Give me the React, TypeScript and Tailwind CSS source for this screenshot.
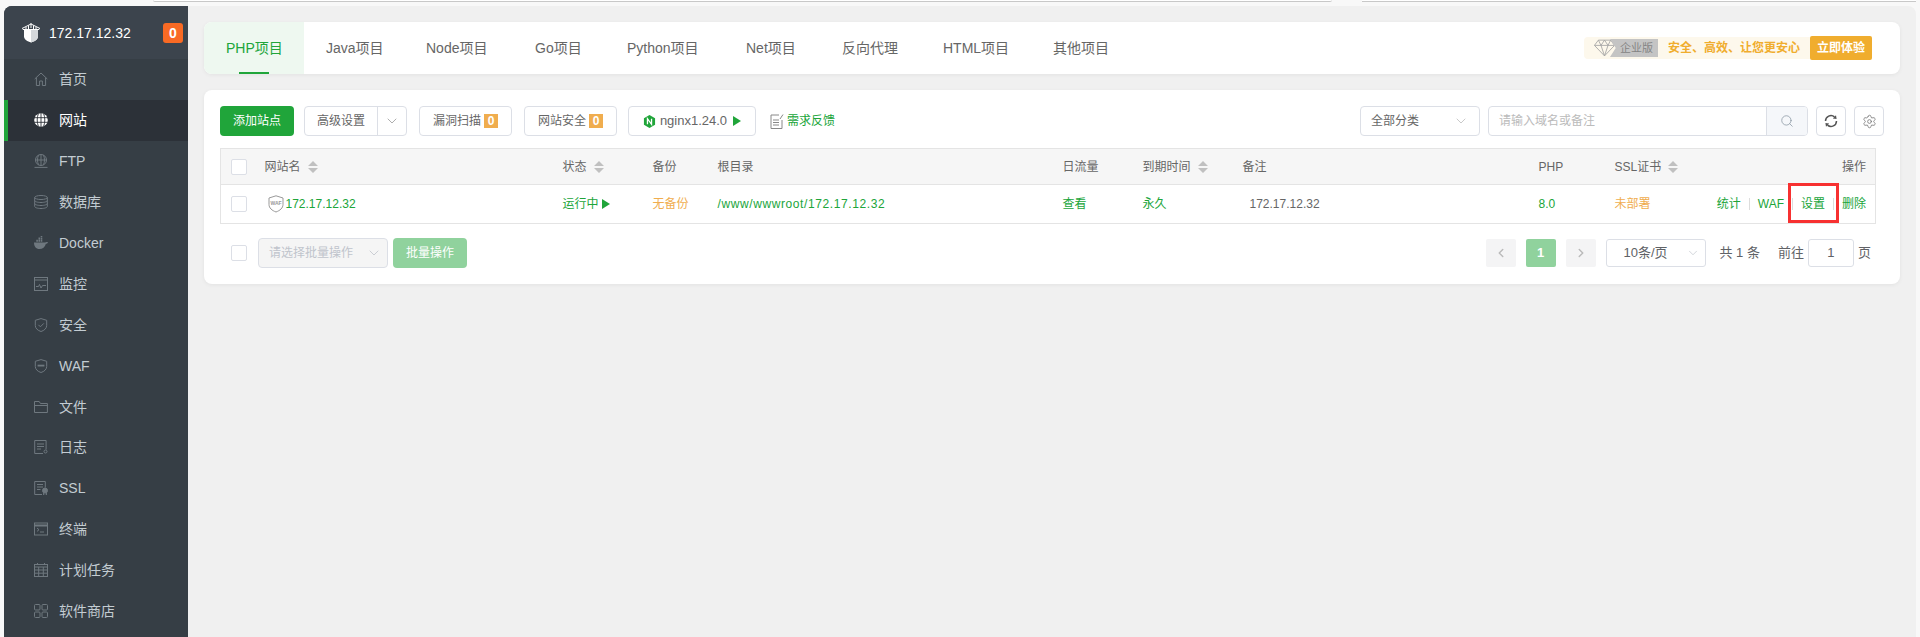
import { ChevronDown, ChevronLeft, ChevronRight, Search, Settings } from "lucide-react"
import type { ReactNode } from "react"

const font = "[font-family:'Liberation_Sans','Noto_Sans_CJK_SC',sans-serif]"

const NavSvg = ({ children }: { children: ReactNode }) => (
  <svg
    viewBox="0 0 14 14"
    fill="none"
    stroke="#6f787f"
    strokeWidth="1"
    className="h-[14px] w-[14px] shrink-0"
  >
    {children}
  </svg>
)

const navItems: { label: string; active?: boolean; icon: ReactNode }[] = [
  {
    label: "首页",
    icon: (
      <NavSvg>
        <path d="M.7 7 7 1l6.300 6M2.400 5.800v7.700h3.200V9h2.800v4.500h3.200V5.800" />
      </NavSvg>
    ),
  },
  {
    label: "网站",
    active: true,
    icon: (
      <svg viewBox="0 0 14 14" className="h-[14px] w-[14px] shrink-0">
        <circle cx="7" cy="7" r="6.800" fill="#fff" />
        <path
          d="M0 4.700h14M0 9.300h14M7 0v14M4.400.6c-1.600 4-1.600 8.800 0 12.800M9.600.6c1.600 4 1.600 8.800 0 12.800"
          fill="none"
          stroke="#2c3138"
          strokeWidth=".9"
        />
      </svg>
    ),
  },
  {
    label: "FTP",
    icon: (
      <NavSvg>
        <circle cx="7" cy="6" r="5.500" />
        <path d="M1.500 6h11M7 .5v11M4.500 1.200c-1.300 3-1.300 6.600 0 9.600M9.500 1.200c1.300 3 1.300 6.600 0 9.600M.5 13.400h13" />
      </NavSvg>
    ),
  },
  {
    label: "数据库",
    icon: (
      <NavSvg>
        <ellipse cx="7" cy="2.500" rx="6.300" ry="2" />
        <path d="M.7 2.500v9c0 1.100 2.800 2 6.300 2s6.300-.9 6.300-2v-9M.7 5.500c0 1.100 2.800 2 6.300 2s6.300-.9 6.300-2M.7 8.500c0 1.100 2.800 2 6.300 2s6.300-.9 6.300-2" />
      </NavSvg>
    ),
  },
  {
    label: "Docker",
    icon: (
      <svg viewBox="0 0 14 14" className="h-[14px] w-[14px] shrink-0" fill="#6f787f">
        <path d="M0 6.500h11.200c.5-.6 1.700-.8 2.800-.3-.4 1-1.300 1.500-2.100 1.500C11 11 8.600 13 5.400 13 2 13 0 10.500 0 6.500Z" />
        <path d="M2.300 3.800h1.600v2H2.300zM4.500 3.800h1.600v2H4.500zM6.700 3.800h1.600v2H6.700zM4.500 1.400h1.600v2H4.500zM6.700 1.400h1.600v2H6.700zM6.700-.6h1.600v1.600H6.700z" />
      </svg>
    ),
  },
  {
    label: "监控",
    icon: (
      <NavSvg>
        <rect x=".5" y=".5" width="13" height="13" />
        <path d="M.5 3h13M2 9.500h2.500l1-2 1.500 3.500 1.500-2.500H12" />
      </NavSvg>
    ),
  },
  {
    label: "安全",
    icon: (
      <NavSvg>
        <path d="M7 .6 1.300 2.300v5.200c0 2.900 2.500 5 5.700 6 3.200-1 5.700-3.100 5.700-6V2.300L7 .6Z" />
        <path d="m4.400 6.800 2 2 3.400-3.400" />
      </NavSvg>
    ),
  },
  {
    label: "WAF",
    icon: (
      <NavSvg>
        <path d="M7 .6 1.300 2.300v5.200c0 2.900 2.500 5 5.700 6 3.200-1 5.700-3.100 5.700-6V2.300L7 .6Z" />
        <path d="M3.600 5.700h6.800v1.800H3.600z" fill="#6f787f" stroke="none" />
      </NavSvg>
    ),
  },
  {
    label: "文件",
    icon: (
      <NavSvg>
        <path d="M.5 12.500v-11h4.700l1.200 2h7v9H.5ZM.5 5.500h13" />
      </NavSvg>
    ),
  },
  {
    label: "日志",
    icon: (
      <NavSvg>
        <path d="M9 13.500H.7V.5h11.400v9M3 4h7M3 6.500h7M3 9h4" />
        <circle cx="11.500" cy="11.500" r="1.500" />
      </NavSvg>
    ),
  },
  {
    label: "SSL",
    icon: (
      <NavSvg>
        <path d="M8 13.500H.7V.5h10.600v6M3 3.500h6M3 6h6M3 8.500h3.500" />
        <circle cx="11" cy="9.500" r="2.500" fill="#6f787f" />
        <path d="M9.700 12v2M12.300 12v2" strokeWidth="1.200" />
      </NavSvg>
    ),
  },
  {
    label: "终端",
    icon: (
      <NavSvg>
        <rect x=".5" y="1" width="13" height="12" />
        <path d="M.5 3.500h13" strokeWidth="2" />
        <path d="m3 6 2 1.700L3 9.400M6 10h4" />
      </NavSvg>
    ),
  },
  {
    label: "计划任务",
    icon: (
      <NavSvg>
        <rect x=".5" y="1.500" width="13" height="12" />
        <path d="M.5 4h13M.5 7h13M.5 10.200h13M4.700 4v9.500M9.300 4v9.500M3.500 0v2M10.500 0v2" />
      </NavSvg>
    ),
  },
  {
    label: "软件商店",
    icon: (
      <NavSvg>
        <rect x=".5" y=".5" width="5.500" height="5.500" rx="1" />
        <rect x="8" y=".5" width="5.500" height="5.500" rx="1" />
        <rect x=".5" y="8" width="5.500" height="5.500" rx="1" />
        <rect x="8" y="8" width="5.500" height="5.500" rx="1" />
      </NavSvg>
    ),
  },
]

const tabs = [
  { label: "PHP项目", width: "w-[100px]" },
  { label: "Java项目", width: "w-[100px]" },
  { label: "Node项目", width: "w-[109px]" },
  { label: "Go项目", width: "w-[92px]" },
  { label: "Python项目", width: "w-[119px]" },
  { label: "Net项目", width: "w-[96px]" },
  { label: "反向代理", width: "w-[101px]" },
  { label: "HTML项目", width: "w-[110px]" },
  { label: "其他项目", width: "w-[101px]" },
]

const SortCaret = () => (
  <svg viewBox="0 0 10 12" className="ml-[7px] h-[12px] w-[10px] shrink-0" fill="#c0c0c0">
    <path d="M5 0 10 5H0ZM5 12 0 7h10Z" />
  </svg>
)

const Play = ({ className }: { className: string }) => (
  <svg viewBox="0 0 8 10" className={className} fill="#20a53a">
    <path d="M0 0 8 5 0 10Z" />
  </svg>
)

const Checkbox = () => (
  <span className="block h-[16px] w-[16px] rounded-[2px] border border-[#dcdfe6] bg-white" />
)

const ToolButton = ({ children, className }: { children: ReactNode; className: string }) => (
  <div
    className={`flex h-[30px] items-center rounded-[4px] border border-[#dcdfe6] bg-white text-xs text-[#666] ${className}`}
  >
    {children}
  </div>
)

const CountBadge = () => (
  <span className="ml-[3px] flex h-[14px] w-[14px] items-center justify-center bg-[#f0ad4e] text-xs leading-none font-bold text-white">
    0
  </span>
)

const Sidebar = () => (
  <aside className="flex w-[184px] shrink-0 flex-col bg-[#363e45]">
    <div className="flex h-[53px] shrink-0 items-center bg-[#3c444d] pr-[5px] pl-[18px]">
      <svg viewBox="0 0 18 20" className="h-[20px] w-[18px] shrink-0">
        <path d="M2 7h14v6.500c0 3-3.500 5-7 6-3.500-1-7-3-7-6V7Z" fill="#fff" />
        <path d="M9 7v12.500c3.500-1 7-3 7-6V7H9Z" fill="#d5d8db" />
        <path d="M0 5.500 9 1l9 4.500-1 1H1l-1-1Z" fill="none" stroke="#fff" strokeWidth="1" />
        <path d="M9 0v5M4 4v2M14 4v2M6.500 2.500V6M11.500 2.500V6" stroke="#fff" strokeWidth="1" />
      </svg>
      <span className="ml-[9px] text-sm text-white">172.17.12.32</span>
      <span className="ml-auto flex h-[20px] w-[20px] items-center justify-center rounded-[3px] bg-[#f96a24] text-sm font-bold text-white">
        0
      </span>
    </div>
    <nav>
      {navItems.map((item) => (
        <div
          key={item.label}
          className={`flex h-[40.9px] items-center text-sm ${
            item.active
              ? "border-l-4 border-[#20a53a] bg-[#2c3138] pl-[26px] text-white"
              : "pl-[30px] text-[#c3ccd2]"
          }`}
        >
          {item.icon}
          <span className="ml-[11px]">{item.label}</span>
        </div>
      ))}
    </nav>
  </aside>
)

const TabBar = () => (
  <div className="flex h-[52px] items-stretch overflow-hidden rounded-[8px] bg-white shadow-[0_1px_4px_rgba(0,0,0,0.06)]">
    {tabs.map((tab, i) => (
      <div
        key={tab.label}
        className={`relative flex items-center pl-[22px] text-sm ${tab.width} ${
          i === 0 ? "bg-[#eef8f0] text-[#20a53a]" : "text-[#666]"
        }`}
      >
        {tab.label}
        {i === 0 && (
          <span className="absolute bottom-0 left-[35px] h-[2px] w-[30px] bg-[#20a53a]" />
        )}
      </div>
    ))}
    <div className="ml-auto flex items-center pr-[28px]">
      <div className="flex h-[22px] items-center rounded-l-[4px] bg-[#fdf8ec] text-xs font-bold">
        <svg viewBox="0 0 24 20" className="ml-[10px] h-[18px] w-[21px]" fill="none" stroke="#a5a5a5">
          <path d="M5 1h14l4.500 6L12 19 .5 7 5 1ZM.5 7h23M8 7l4 12 4-12M5 1l3 6 4-6 4 6 3-6" />
        </svg>
        <span className="-ml-[5px] flex h-[18px] w-[48px] items-center justify-end bg-[#c4c4c4] pr-[5px] text-[11px] font-normal text-[#858585] [clip-path:polygon(0_0,100%_0,100%_100%,0_100%,12%_50%)]">
          企业版
        </span>
        <span className="mx-[10px] text-[#f0ad2e]">安全、高效、让您更安心</span>
      </div>
      <div className="flex h-[24px] w-[62px] items-center justify-center rounded-[2px] bg-[#f0ad2e] text-xs font-bold text-white">
        立即体验
      </div>
    </div>
  </div>
)

const Toolbar = () => (
  <div className="flex h-[30px] items-center">
    <div className="flex h-[30px] w-[74px] items-center justify-center rounded-[4px] bg-[#20a53a] text-xs text-white">
      添加站点
    </div>
    <ToolButton className="ml-[10px] w-[103px]">
      <span className="flex h-full w-[73px] items-center justify-center border-r border-[#dcdfe6]">
        高级设置
      </span>
      <ChevronDown className="ml-[6px] h-[16px] w-[16px] text-[#999]" strokeWidth={1.2} />
    </ToolButton>
    <ToolButton className="ml-[12px] w-[93px] justify-center">
      漏洞扫描
      <CountBadge />
    </ToolButton>
    <ToolButton className="ml-[12px] w-[93px] justify-center">
      网站安全
      <CountBadge />
    </ToolButton>
    <ToolButton className="ml-[11px] w-[128px] justify-center">
      <svg viewBox="0 0 14 14" className="h-[13px] w-[13px]">
        <path d="M7 0 13 3.500v7L7 14 1 10.500v-7L7 0Z" fill="#20a53a" />
        <path d="M4.800 10V4l4.400 6V4" fill="none" stroke="#fff" strokeWidth="1.400" />
      </svg>
      <span className="ml-[4px] text-[13px]">nginx1.24.0</span>
      <Play className="ml-[6px] h-[10px] w-[8px]" />
    </ToolButton>
    <svg viewBox="0 0 14 16" className="ml-[14px] h-[16px] w-[14px]" fill="none" stroke="#888">
      <path d="M9 2H1v13.500h11V7M3 7h6M3 9.500h6M3 12h6M10 6l3-4.500" />
    </svg>
    <span className="ml-[3px] text-xs text-[#20a53a]">需求反馈</span>
    <div className="ml-auto flex h-[30px] w-[120px] items-center justify-between rounded-[4px] border border-[#dcdfe6] px-[10px] text-xs text-[#666]">
      全部分类
      <ChevronDown className="h-[16px] w-[16px] text-[#bbb]" strokeWidth={1.2} />
    </div>
    <div className="ml-[8px] flex h-[30px] w-[320px] items-center overflow-hidden rounded-[4px] border border-[#dcdfe6]">
      <span className="flex-1 pl-[10px] text-xs text-[#bbb]">请输入域名或备注</span>
      <span className="flex h-full w-[41px] items-center justify-center border-l border-[#dcdfe6] bg-[#f5f7fa]">
        <Search className="h-[14px] w-[14px] text-[#8a97a3]" strokeWidth={1.3} />
      </span>
    </div>
    <ToolButton className="ml-[8px] w-[30px] justify-center">
      <svg viewBox="0 0 14 14" className="h-[14px] w-[14px]" fill="none" stroke="#555" strokeWidth="1.500">
        <path d="M1.500 7A5.500 5.500 0 0 1 10.500 2.800M12.500 7A5.500 5.500 0 0 1 3.500 11.200" />
        <path d="M8.800 4.600 12.600 4.900 12 1.200ZM5.200 9.400 1.400 9.100 2 12.800Z" fill="#555" stroke="none" />
      </svg>
    </ToolButton>
    <ToolButton className="ml-[8px] w-[30px] justify-center">
      <Settings className="h-[15px] w-[15px] text-[#777]" strokeWidth={1.3} />
    </ToolButton>
  </div>
)

const SiteTable = () => (
  <table className="mt-[12px] w-[1656px] table-fixed border-collapse border border-[#e4e4e4] text-xs text-[#666]">
    <colgroup>
      <col className="w-[35px]" />
      <col className="w-[298px]" />
      <col className="w-[90px]" />
      <col className="w-[65px]" />
      <col className="w-[345px]" />
      <col className="w-[80px]" />
      <col className="w-[100px]" />
      <col className="w-[296px]" />
      <col className="w-[76px]" />
      <col className="w-[95px]" />
      <col />
    </colgroup>
    <thead>
      <tr className="h-[36px] border-b border-[#e4e4e4] bg-[#f6f6f6] text-left">
        <th className="pl-[10px] font-normal">
          <Checkbox />
        </th>
        <th className="pl-[9px] font-normal">
          <span className="flex items-center">
            网站名
            <SortCaret />
          </span>
        </th>
        <th className="pl-[9px] font-normal">
          <span className="flex items-center">
            状态
            <SortCaret />
          </span>
        </th>
        <th className="pl-[9px] font-normal">备份</th>
        <th className="pl-[9px] font-normal">根目录</th>
        <th className="pl-[9px] font-normal">日流量</th>
        <th className="pl-[9px] font-normal">
          <span className="flex items-center">
            到期时间
            <SortCaret />
          </span>
        </th>
        <th className="pl-[9px] font-normal">备注</th>
        <th className="pl-[9px] font-normal">PHP</th>
        <th className="pl-[9px] font-normal">
          <span className="flex items-center">
            SSL证书
            <SortCaret />
          </span>
        </th>
        <th className="pr-[9px] text-right font-normal">操作</th>
      </tr>
    </thead>
    <tbody>
      <tr className="h-[39px] text-[#20a53a]">
        <td className="pl-[10px]">
          <Checkbox />
        </td>
        <td className="pl-[12px]">
          <span className="flex items-center">
            <svg viewBox="0 0 16 18" className="h-[18px] w-[16px]" fill="none" stroke="#999">
              <path d="M8 .8 1 3v6.500c0 3.500 3 6 7 7.500 4-1.500 7-4 7-7.500V3L8 .8Z" />
              <text x="8" y="9.500" textAnchor="middle" fontSize="5" fontWeight="700" fill="#999" stroke="none">
                WAF
              </text>
            </svg>
            <span className="ml-[2px]">172.17.12.32</span>
          </span>
        </td>
        <td className="pl-[9px]">
          <span className="flex items-center">
            运行中
            <Play className="ml-[3px] h-[10px] w-[8px]" />
          </span>
        </td>
        <td className="pl-[9px] text-[#f0ad4e]">无备份</td>
        <td className="pl-[9px] tracking-[0.6px]">/www/wwwroot/172.17.12.32</td>
        <td className="pl-[9px]">查看</td>
        <td className="pl-[9px]">永久</td>
        <td className="pl-[16px] text-[#666]">172.17.12.32</td>
        <td className="pl-[9px]">8.0</td>
        <td className="pl-[9px] text-[#f0ad4e]">未部署</td>
        <td className="relative pr-[9px]">
          <span className="flex items-center justify-end">
            统计
            <span className="mx-[8px] h-[12px] w-px bg-[#ddd]" />
            WAF
            <span className="mx-[8px] h-[12px] w-px bg-[#ddd]" />
            设置
            <span className="mx-[8px] h-[12px] w-px bg-[#ddd]" />
            删除
          </span>
          <span className="absolute top-[-2px] left-[87px] h-[40px] w-[51px] border-[3px] border-[#f73131]" />
        </td>
      </tr>
    </tbody>
  </table>
)

const PageButton = ({ children, className }: { children: ReactNode; className: string }) => (
  <span className={`flex h-[28px] w-[30px] items-center justify-center rounded-[2px] ${className}`}>
    {children}
  </span>
)

const Footer = () => (
  <div className="mt-[14px] flex h-[30px] items-center pl-[11px] text-xs">
    <Checkbox />
    <div className="ml-[11px] flex h-[30px] w-[130px] items-center justify-between rounded-[4px] border border-[#dcdfe6] bg-[#f5f5f5] pr-[5px] pl-[10px] text-[#c0c4cc]">
      请选择批量操作
      <ChevronDown className="h-[16px] w-[16px] text-[#c0c4cc]" strokeWidth={1.2} />
    </div>
    <div className="ml-[5px] flex h-[30px] w-[74px] items-center justify-center rounded-[4px] bg-[#90d29d] text-white">
      批量操作
    </div>
    <PageButton className="ml-auto bg-[#f4f4f5] text-[#bbb]">
      <ChevronLeft className="h-[14px] w-[14px]" strokeWidth={2.5} />
    </PageButton>
    <PageButton className="ml-[10px] bg-[#90d29d] text-[13px] font-bold text-white">1</PageButton>
    <PageButton className="ml-[10px] bg-[#f4f4f5] text-[#bbb]">
      <ChevronRight className="h-[14px] w-[14px]" strokeWidth={2.5} />
    </PageButton>
    <div className="ml-[10px] flex h-[28px] w-[100px] items-center justify-between rounded-[3px] border border-[#dcdfe6] pr-[5px] pl-[17px] text-[13px] text-[#606266]">
      10条/页
      <ChevronDown className="h-[14px] w-[14px] text-[#c0c4cc]" strokeWidth={1.2} />
    </div>
    <span className="ml-[14px] text-[13px] text-[#606266]">共 1 条</span>
    <span className="ml-[18px] text-[13px] text-[#606266]">前往</span>
    <span className="ml-[4px] flex h-[28px] w-[46px] items-center justify-center rounded-[3px] border border-[#dcdfe6] text-[13px] text-[#606266]">
      1
    </span>
    <span className="mr-[13px] ml-[4px] text-[13px] text-[#606266]">页</span>
  </div>
)

export default function App() {
  return (
    <div className={`h-[637px] w-[1920px] overflow-hidden bg-[#f8f8f8] px-[4px] ${font}`}>
      <div className="flex h-[6px] items-start">
        <span className="ml-[149px] h-[2px] w-[1179px] rounded-b-[3px] border-b border-[#c8c8c8] bg-white" />
        <span className="ml-[30px] h-[2px] flex-1 border-b border-[#c8c8c8] bg-white" />
      </div>
      <div className="flex h-[631px] overflow-hidden rounded-t-[8px]">
        <Sidebar />
        <main className="flex-1 bg-[#f0f0f0] px-[16px] pt-[16px]">
          <TabBar />
          <section className="mt-[16px] h-[194px] rounded-[8px] bg-white px-[16px] pt-[16px] shadow-[0_1px_4px_rgba(0,0,0,0.06)]">
            <Toolbar />
            <SiteTable />
            <Footer />
          </section>
        </main>
      </div>
    </div>
  )
}
